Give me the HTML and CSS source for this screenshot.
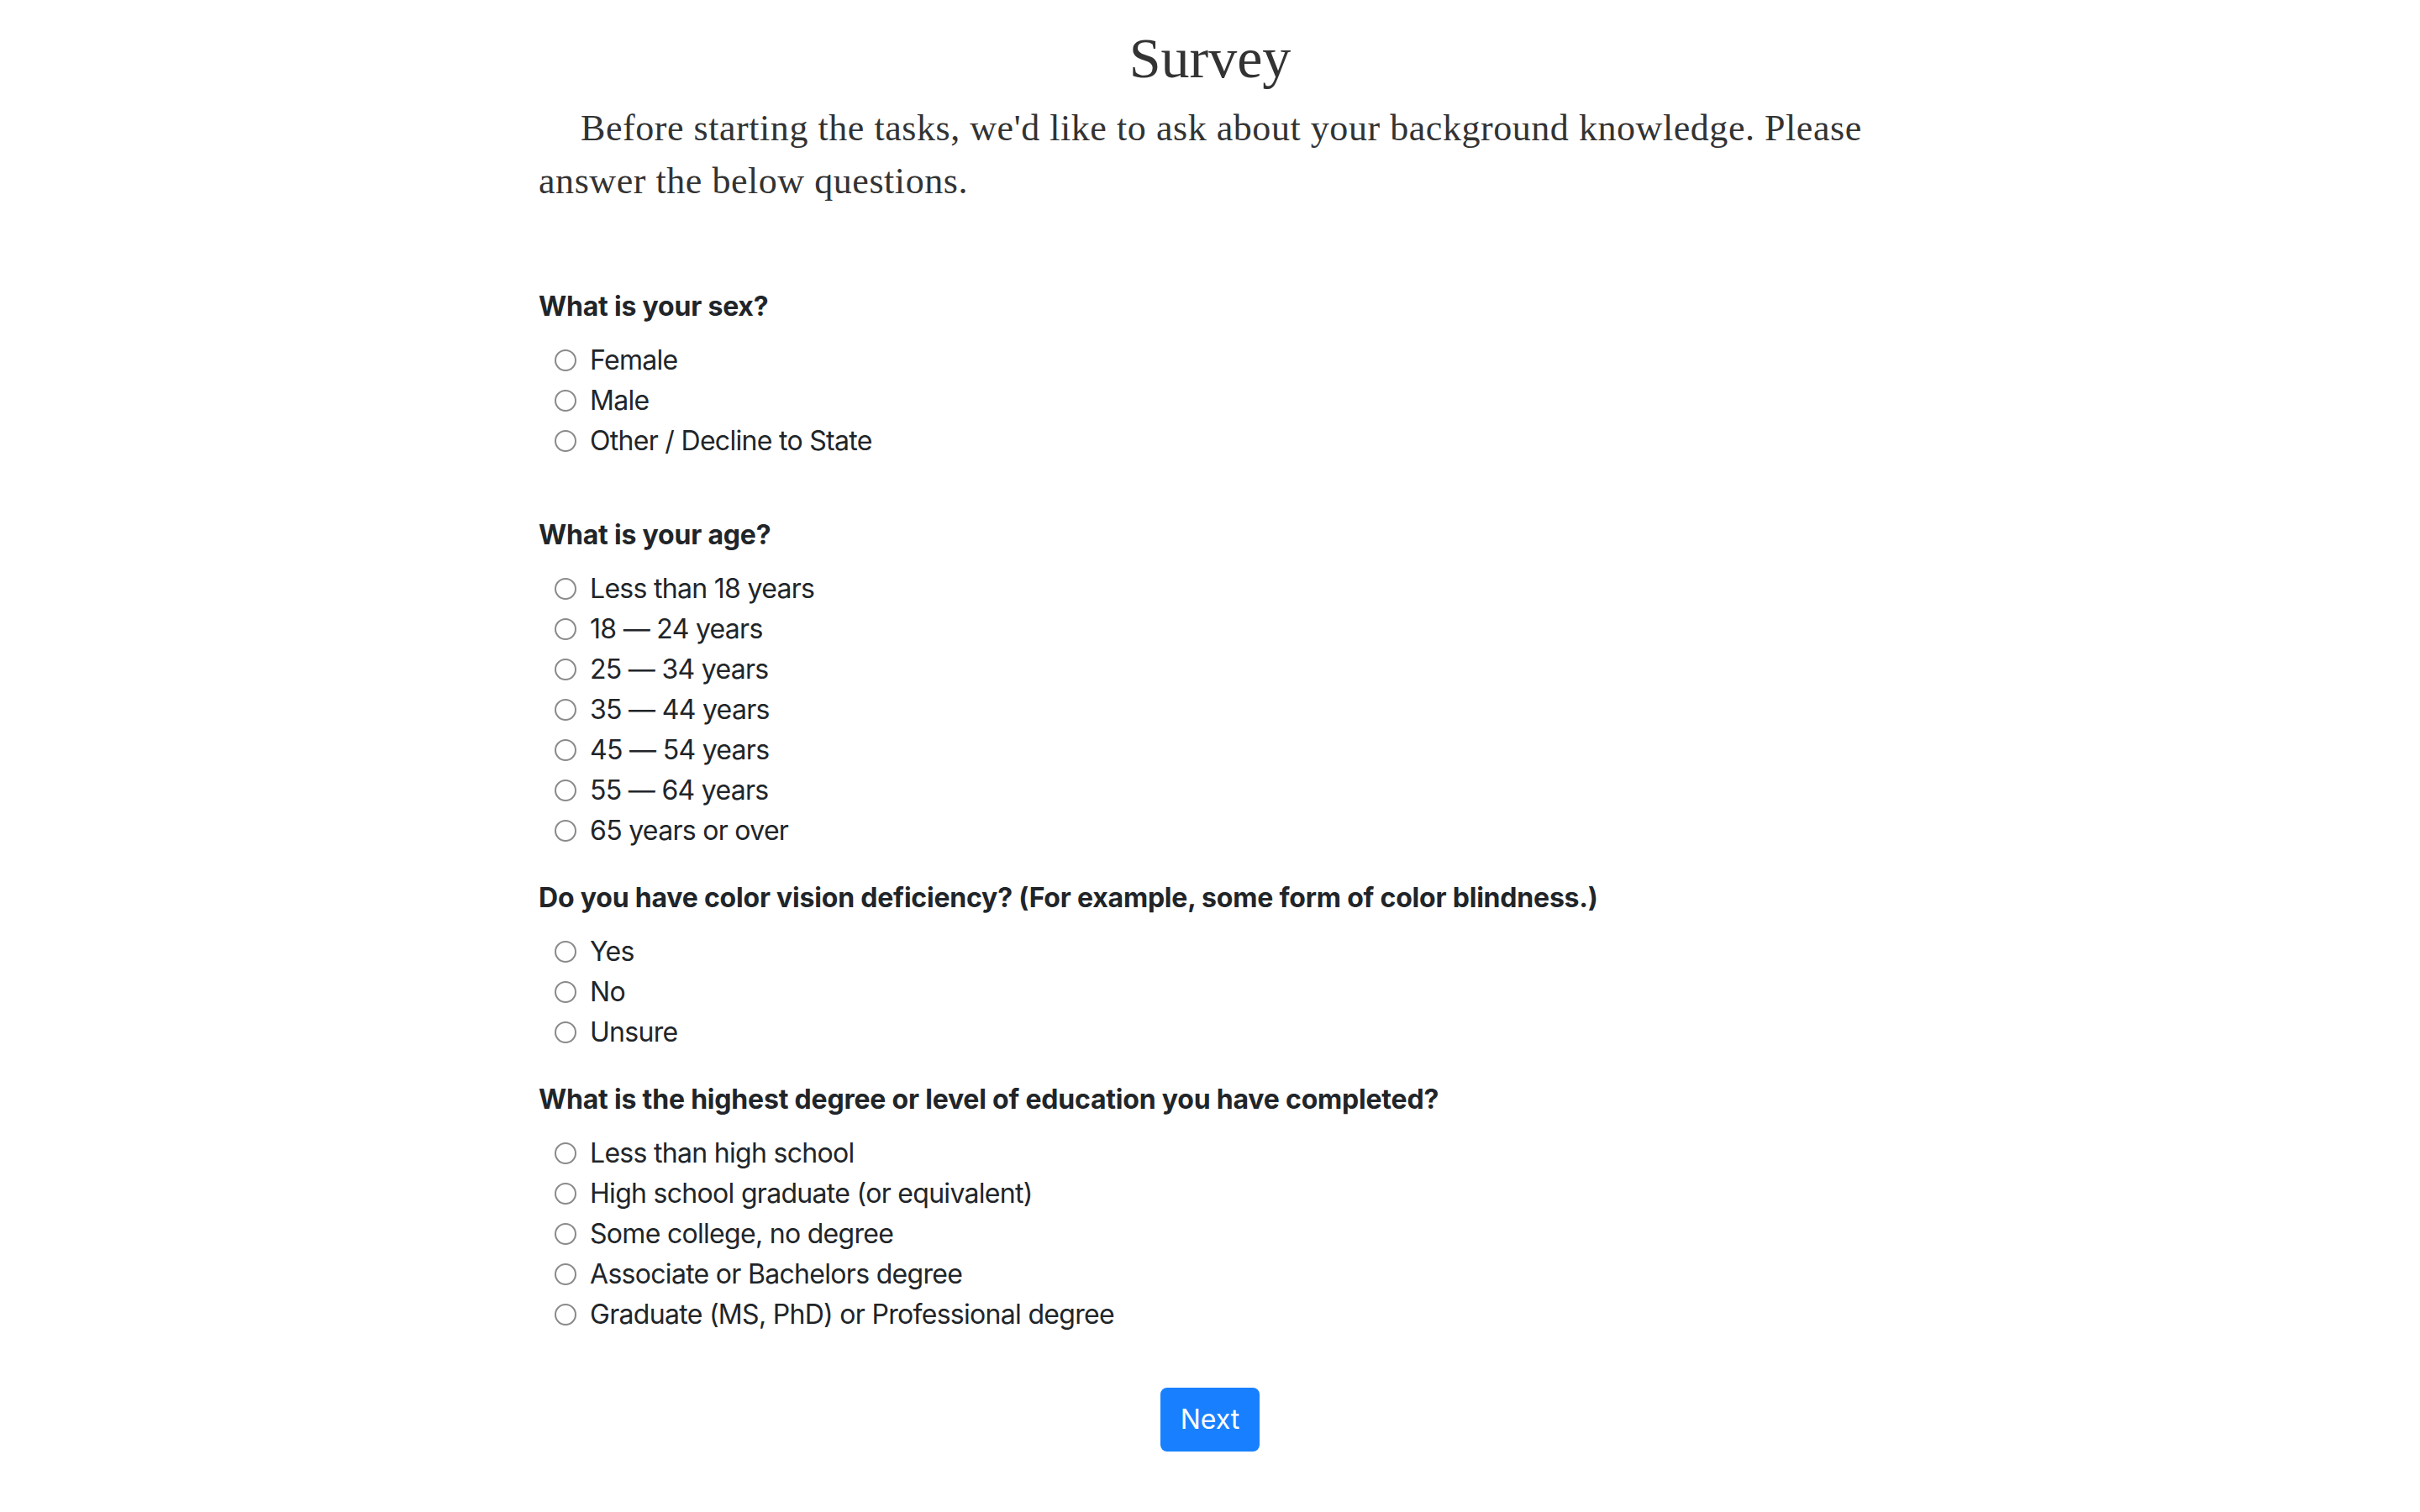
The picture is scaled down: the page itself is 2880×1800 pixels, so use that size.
FILE: index.html
```html
<!DOCTYPE html>
<html lang="en">
<head>
<meta charset="utf-8">
<title>Survey</title>
<link rel="stylesheet" href="styles.css">
</head>
<body>
<main class="container">
  <h1 class="title">Survey</h1>
  <p class="intro">Before starting the tasks, we'd like to ask about your background knowledge. Please answer the below questions.</p>

  <form class="survey">
    <fieldset class="q q-first">
      <div class="q-label">What is your sex?</div>
      <label class="opt"><input type="radio" name="sex"><span>Female</span></label>
      <label class="opt"><input type="radio" name="sex"><span>Male</span></label>
      <label class="opt"><input type="radio" name="sex"><span>Other / Decline to State</span></label>
    </fieldset>

    <fieldset class="q">
      <div class="q-label">What is your age?</div>
      <label class="opt"><input type="radio" name="age"><span>Less than 18 years</span></label>
      <label class="opt"><input type="radio" name="age"><span>18 — 24 years</span></label>
      <label class="opt"><input type="radio" name="age"><span>25 — 34 years</span></label>
      <label class="opt"><input type="radio" name="age"><span>35 — 44 years</span></label>
      <label class="opt"><input type="radio" name="age"><span>45 — 54 years</span></label>
      <label class="opt"><input type="radio" name="age"><span>55 — 64 years</span></label>
      <label class="opt"><input type="radio" name="age"><span>65 years or over</span></label>
    </fieldset>

    <fieldset class="q">
      <div class="q-label">Do you have color vision deficiency? (For example, some form of color blindness.)</div>
      <label class="opt"><input type="radio" name="cvd"><span>Yes</span></label>
      <label class="opt"><input type="radio" name="cvd"><span>No</span></label>
      <label class="opt"><input type="radio" name="cvd"><span>Unsure</span></label>
    </fieldset>

    <fieldset class="q q-last">
      <div class="q-label">What is the highest degree or level of education you have completed?</div>
      <label class="opt"><input type="radio" name="edu"><span>Less than high school</span></label>
      <label class="opt"><input type="radio" name="edu"><span>High school graduate (or equivalent)</span></label>
      <label class="opt"><input type="radio" name="edu"><span>Some college, no degree</span></label>
      <label class="opt"><input type="radio" name="edu"><span>Associate or Bachelors degree</span></label>
      <label class="opt"><input type="radio" name="edu"><span>Graduate (MS, PhD) or Professional degree</span></label>
    </fieldset>

    <div class="actions">
      <button type="button" class="btn">Next</button>
    </div>
  </form>
</main>
</body>
</html>
```

FILE: styles.css
```css
html, body {
  margin: 0;
  padding: 0;
  background: #ffffff;
}

body {
  font-family: Inter, "Noto Sans", "Liberation Sans", sans-serif;
  font-size: 32px;
  line-height: 48px;
  color: #212529;
}

.container {
  width: 1598px;
  margin: 0 auto;
  padding: 0;
}

.title {
  margin: 29px 0 0;
  font-family: "Liberation Serif", serif;
  font-weight: 400;
  font-size: 68px;
  line-height: 80px;
  text-align: center;
  color: #333333;
}

.intro {
  margin: 13px 0 0;
  font-family: "Liberation Serif", serif;
  font-size: 44px;
  line-height: 62.5px;
  letter-spacing: 0.55px;
  text-indent: 50px;
  color: #333333;
}

.survey {
  margin-top: 94px;
}

.q {
  border: 0;
  margin: 0 0 32px;
  padding: 0;
  min-width: 0;
}

.q-first {
  margin-bottom: 64px;
}

.q-last {
  margin-bottom: 63px;
}

.q-label {
  font-weight: 700;
  letter-spacing: -0.2px;
  margin-bottom: 16px;
}

.opt {
  display: flex;
  align-items: center;
  height: 48px;
  padding-left: 19px;
  gap: 16px;
  letter-spacing: -0.7px;
}

.opt input {
  appearance: none;
  -webkit-appearance: none;
  width: 26px;
  height: 26px;
  margin: 0;
  border: 2px solid #8a8a8a;
  border-radius: 50%;
  background: #ffffff;
  flex: none;
}

.actions {
  display: flex;
  justify-content: center;
}

.btn {
  font-family: Inter, "Noto Sans", "Liberation Sans", sans-serif;
  font-size: 32px;
  line-height: 48px;
  color: #ffffff;
  background: #1880fe;
  border: 2px solid #1880fe;
  border-radius: 8px;
  padding: 12px 22px;
  cursor: pointer;
}
```
